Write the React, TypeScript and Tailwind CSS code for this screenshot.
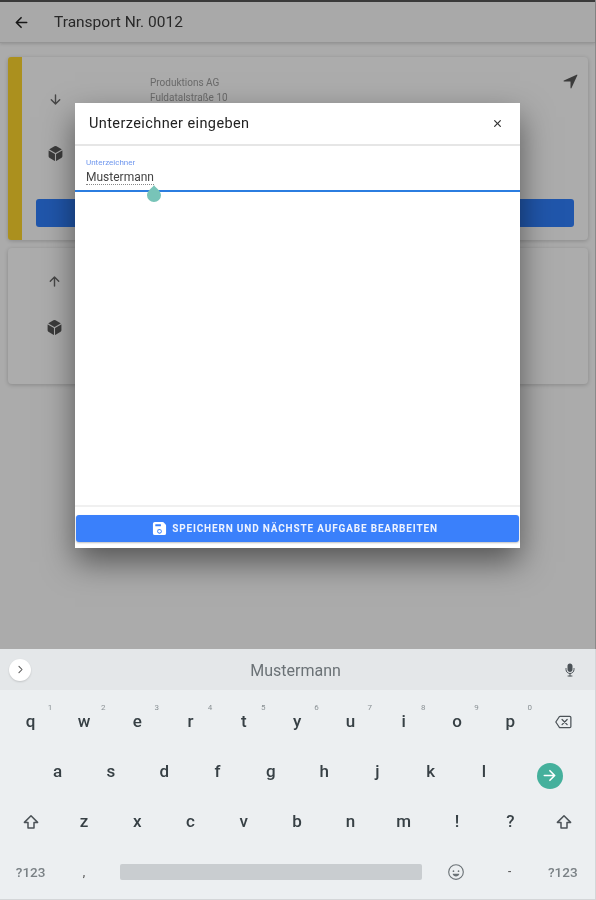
import React from "react";
import { IoArrowBack, IoArrowDown, IoArrowUp, IoCube, IoNavigate, IoClose, IoSave, IoMic, IoChevronForward, IoHappyOutline, IoBackspaceOutline, IoArrowForward } from "react-icons/io5";

const Shift = () => (
  <svg width="16" height="16" viewBox="0 0 16 16" fill="none" stroke="#4b5257" strokeWidth="1.5" strokeLinejoin="round">
    <path d="M8 1.8 14.6 8.4H11V14H5V8.4H1.4Z" />
  </svg>
);

const Key = ({ k, sup }: { k: React.ReactNode; sup?: string }) => (
  <div className="relative flex h-full w-[53.3px] shrink-0 items-center justify-center text-[17px] font-medium text-[#374045]">
    {k}
    {sup && <span className="absolute right-[5px] top-[4px] text-[8px] font-normal text-[#8a9195]">{sup}</span>}
  </div>
);

const Row = ({ keys, sups }: { keys: string[]; sups?: string[] }) => (
  <>
    {keys.map((k, i) => (
      <Key key={k} k={k} sup={sups?.[i]} />
    ))}
  </>
);

export default function App() {
  return (
    <div className="flex h-[900px] w-[596px] flex-col overflow-hidden bg-[#eceff1] blur-[0.6px] [font-family:Roboto,sans-serif]">
      <div className="relative flex-1 border-r border-[#8a8a8a] bg-[#f5f5f5]">
        <div className="h-[2px] bg-[#555]" />
        <header className="flex h-[41px] items-center border-b border-[#d6d6d6] bg-[#f3f3f3] pl-[13px] shadow-[0_1px_3px_rgba(0,0,0,0.15)]">
          <IoArrowBack className="text-[17px] text-[#222]" />
          <span className="ml-[24px] pt-[1px] text-[15.5px] text-[#3a3a3a]">Transport Nr. 0012</span>
        </header>

        <main className="flex flex-col gap-[8px] pl-[8px] pr-[7px] pt-[14px]">
          <section className="flex h-[183px] rounded-[4px] bg-[#f6f6f6] shadow-[0_1px_4px_rgba(0,0,0,0.2)]">
            <div className="w-[14px] rounded-l-[3px] bg-[#f5cf2b]" />
            <div className="flex min-w-0 flex-1 flex-col px-[14px]">
              <div className="flex h-[142px] pt-[18px]">
                <div className="flex w-[39px] flex-col items-center pt-[17px]">
                  <IoArrowDown className="text-[15px] text-[#666]" />
                  <IoCube className="mt-[38px] text-[17px] text-[#555]" />
                </div>
                <div className="ml-[75px] flex-1 text-[10px] leading-[15px] text-[#999]">
                  <div>Produktions AG</div>
                  <div>Fuldatalstraße 10</div>
                </div>
                <IoNavigate className="mr-[-5px] mt-[-2px] text-[17px] text-[#555]" />
              </div>
              <div className="h-[28px] rounded-[3px] bg-[#2f7cf5]" />
            </div>
          </section>

          <section className="h-[136px] rounded-[4px] bg-[#f6f6f6] pl-[39px] pt-[26px] shadow-[0_1px_4px_rgba(0,0,0,0.2)]">
            <IoArrowUp className="text-[15px] text-[#666]" />
            <IoCube className="ml-[-1px] mt-[30px] text-[17px] text-[#555]" />
          </section>
        </main>

        <div className="absolute inset-0 bg-black/30" />

        <div className="absolute left-[75px] top-[103px] flex h-[445px] w-[445px] flex-col bg-white shadow-[0_14px_30px_rgba(0,0,0,0.5)]">
          <div className="flex h-[43px] items-center justify-between border-b-2 border-[#e6e6e6] pl-[14px] pr-[16px]">
            <span className="text-[14.5px] tracking-[0.4px] text-[#222]">Unterzeichner eingeben</span>
            <IoClose className="text-[13px] text-[#333]" />
          </div>
          <div className="relative h-[46px] border-b-2 border-[#2b7de0] pl-[11px] pt-[12px]">
            <div className="text-[8px] leading-[9px] text-[#6f97ee]">Unterzeichner</div>
            <div className="mt-[4px] block w-fit border-b border-dotted border-[#888] text-[12px] leading-[13px] text-[#444]">Mustermann</div>
            <svg className="absolute left-[72px] top-[39px]" width="14" height="17" viewBox="0 0 14 17">
              <path d="M7 0C8 2.5 14 5.5 14 10.2A7 6.8 0 0 1 0 10.2C0 5.5 6 2.5 7 0Z" fill="#78c4b8" />
            </svg>
          </div>
          <div className="flex-1" />
          <div className="border-t-2 border-[#f0f0f0] px-px pb-[6px] pt-[8px]">
            <button className="flex h-[27px] w-full items-center justify-center gap-[5px] rounded-[3px] bg-[#3a80fb] pr-[5px] text-[10px] font-bold tracking-[0.83px] text-[#eef3ff] shadow-[0_1px_2px_rgba(0,0,0,0.25)]">
              <IoSave className="text-[15px] text-white" />
              SPEICHERN UND NÄCHSTE AUFGABE BEARBEITEN
            </button>
          </div>
        </div>
      </div>

      <div className="h-[251px] shrink-0 border-b border-r border-[#d4d6d8]">
        <div className="flex h-[41px] items-center justify-between bg-[#e4e7e9] pl-[9px] pr-[17px]">
          <div className="flex h-[22px] w-[22px] items-center justify-center rounded-full bg-white shadow-[0_1px_2px_rgba(0,0,0,0.15)]">
            <IoChevronForward className="text-[11px] text-[#555]" />
          </div>
          <span className="ml-[-2px] pt-[2px] text-[16px] text-[#6b7276]">Mustermann</span>
          <IoMic className="text-[16px] text-[#4b5257]" />
        </div>

        <div className="flex h-[56px] pl-[4px] pt-[8px]">
          <Row keys={["q", "w", "e", "r", "t", "y", "u", "i", "o", "p"]} sups={["1", "2", "3", "4", "5", "6", "7", "8", "9", "0"]} />
          <Key k={<IoBackspaceOutline className="text-[20px] text-[#4b5257]" />} />
        </div>

        <div className="flex h-[51px] items-center pl-[31px]">
          <Row keys={["a", "s", "d", "f", "g", "h", "j", "k", "l"]} />
          <div className="ml-[26px] mt-[8px] flex h-[26px] w-[26px] items-center justify-center rounded-full bg-[#45b09c]">
            <IoArrowForward className="text-[17px] text-white" />
          </div>
        </div>

        <div className="flex h-[50px] items-center pl-[4px]">
          <Key k={<Shift />} />
          <Row keys={["z", "x", "c", "v", "b", "n", "m", "!", "?"]} />
          <Key k={<Shift />} />
        </div>

        <div className="flex h-[50px] items-center pl-[4px]">
          <Key k={<span className="text-[13.5px] text-[#7a8185]">?123</span>} />
          <Key k={<span className="text-[10px] font-bold text-[#555]">,</span>} />
          <div className="ml-[9px] h-[16px] w-[302px] rounded-[2px] bg-[#c9cdd0]" />
          <div className="ml-[8px]">
            <Key k={<IoHappyOutline className="text-[18px] text-[#6b7276]" />} />
          </div>
          <Key k={<span className="text-[11px] text-[#555]">-</span>} />
          <Key k={<span className="text-[13.5px] text-[#7a8185]">?123</span>} />
        </div>
      </div>
    </div>
  );
}
